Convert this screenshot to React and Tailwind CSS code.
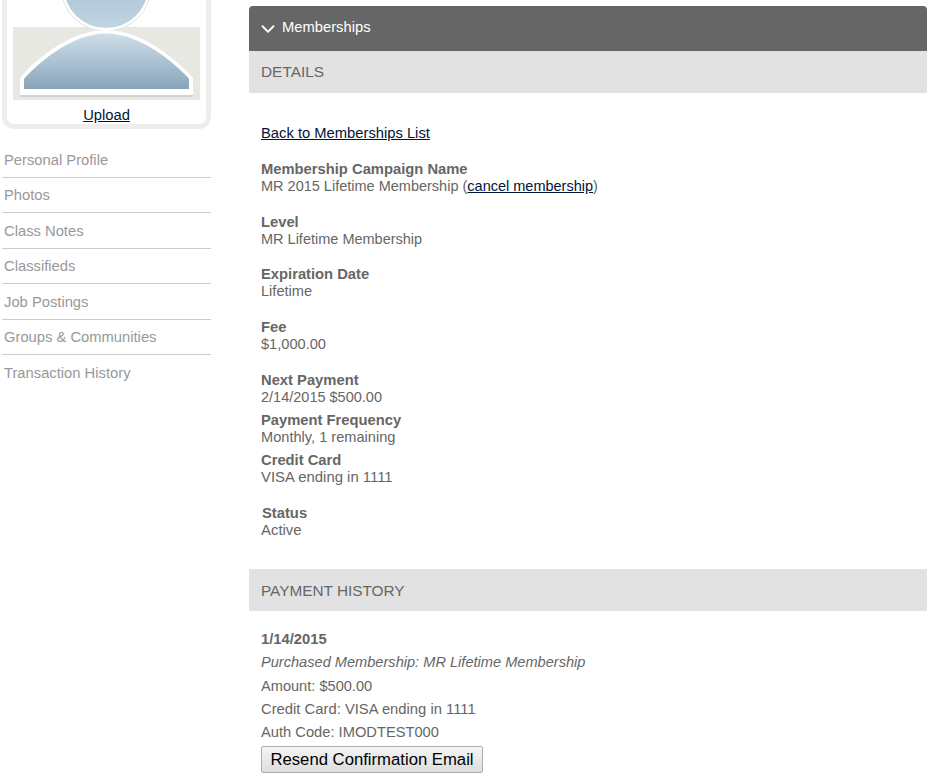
import React from 'react';
import { ChevronDown } from 'lucide-react';

const navItems = ['Personal Profile', 'Photos', 'Class Notes', 'Classifieds', 'Job Postings', 'Groups & Communities', 'Transaction History'];

const Avatar = () => (
  <svg width="187" height="100" viewBox="0 0 187 100" className="block">
    <defs>
      <linearGradient id="head" x1="0" y1="0" x2="0" y2="1">
        <stop offset="0" stopColor="#9dbad0" />
        <stop offset="1" stopColor="#c0d4e1" />
      </linearGradient>
      <linearGradient id="body" x1="0" y1="0" x2="0" y2="1">
        <stop offset="0" stopColor="#cfdee8" />
        <stop offset="0.55" stopColor="#a9bfd0" />
        <stop offset="1" stopColor="#88a3b9" />
      </linearGradient>
    </defs>
    <rect width="187" height="27" fill="#ffffff" />
    <rect y="27" width="187" height="73" fill="#e8e8e3" />
    <ellipse cx="93" cy="-13" rx="45" ry="44" fill="#ffffff" stroke="#dfe3e4" strokeWidth="1" />
    <ellipse cx="93" cy="-13" rx="42" ry="41" fill="url(#head)" />
    <path d="M7 96 L7 78 C18 64 55 30 93 30 C131 30 168 64 180 78 L180 96 Z" fill="#d2d2ce" transform="translate(0 1)" />
    <path d="M7 95 L7 78 C18 64 55 30 93 30 C131 30 168 64 180 78 L180 95 Z" fill="#ffffff" />
    <path d="M11 89 L11 79 C22 66 57 33.500 93 33.500 C129 33.500 165 66 176 79 L176 89 Z" fill="url(#body)" />
  </svg>
);

const Field = ({ label, className = 'mb-[19px]', valueClass = '', children }) => (
  <div className={className}>
    <div className="font-bold">{label}</div>
    <div className={valueClass}>{children}</div>
  </div>
);

const App = () => {
  return (
    <div className="h-[777px] overflow-hidden bg-white flex font-['Liberation_Sans',Arial,sans-serif] text-[14.75px] leading-[17px] text-[#666666]">
      <aside className="w-[249px] shrink-0 pl-[2px]">
        <div className="w-[209px] h-[129px] border-x-[5px] border-b-[5px] border-[#eeeeee] rounded-b-xl pl-[6px]">
          <Avatar />
          <div className="text-center pt-[7px] pr-[6px]">
            <a href="#" className="underline text-[#00143c]">Upload</a>
          </div>
        </div>
        <ul className="w-[209px] mt-[13px]">
          {navItems.map((item, i) => (
            <li key={item} className={`pl-[2px] h-[35.5px] pt-[9.5px] text-[#999999] ${i < navItems.length - 1 ? 'border-b border-[#cccccc]' : ''}`}>
              {item}
            </li>
          ))}
        </ul>
      </aside>

      <main className="w-[678px] pt-[6px]">
        <div className="h-[45px] bg-[#666666] rounded-t flex items-center pl-[8px] pb-[2px] text-white">
          <ChevronDown size={22} strokeWidth={2} className="mr-[3px] mt-[2px]" />
          <span>Memberships</span>
        </div>
        <div className="h-[42px] bg-[#e2e2e2] flex items-center px-3 pb-px text-[15.4px]">DETAILS</div>

        <div className="px-3 pt-[32px]">
          <p className="mb-[19px]"><a href="#" className="underline text-[#00143c]">Back to Memberships List</a></p>
          <Field label="Membership Campaign Name" valueClass="text-[14.5px]">
            MR 2015 Lifetime Membership (<a href="#" className="underline text-[#00143c]">cancel membership</a>)
          </Field>
          <Field label="Level" className="mb-[18px]" valueClass="text-[14.5px]">MR Lifetime Membership</Field>
          <Field label="Expiration Date" valueClass="text-[14.6px]">Lifetime</Field>
          <Field label="Fee" valueClass="text-[14.6px]">$1,000.00</Field>
          <Field label="Next Payment" className="mb-[6px]" valueClass="text-[14.5px]">2/14/2015 $500.00</Field>
          <Field label="Payment Frequency" className="mb-[6px]" valueClass="text-[14.6px]">Monthly, 1 remaining</Field>
          <Field label="Credit Card" valueClass="text-[14.9px]">VISA ending in 1111</Field>
          <div className="mb-[30px]">
            <div className="font-bold pl-px">Status</div>
            <div className="text-[14.9px]">Active</div>
          </div>
        </div>

        <div className="h-[42px] bg-[#e2e2e2] flex items-center px-3 text-[15.35px]">PAYMENT HISTORY</div>

        <div className="px-3 pt-[17px] leading-[23.3px]">
          <div className="font-bold">1/14/2015</div>
          <div className="italic text-[14.6px]">Purchased Membership: MR Lifetime Membership</div>
          <div className="text-[14.6px]">Amount: $500.00</div>
          <div className="text-[14.8px]">Credit Card: VISA ending in 1111</div>
          <div className="text-[14.7px]">Auth Code: IMODTEST000</div>
          <button className="mt-[2px] h-[27px] w-[222px] border border-[#adadad] rounded-[2px] bg-gradient-to-b from-[#f5f5f5] to-[#dddddd] text-black text-[16.7px] leading-none">
            Resend Confirmation Email
          </button>
        </div>
      </main>
    </div>
  );
};

export default App;
